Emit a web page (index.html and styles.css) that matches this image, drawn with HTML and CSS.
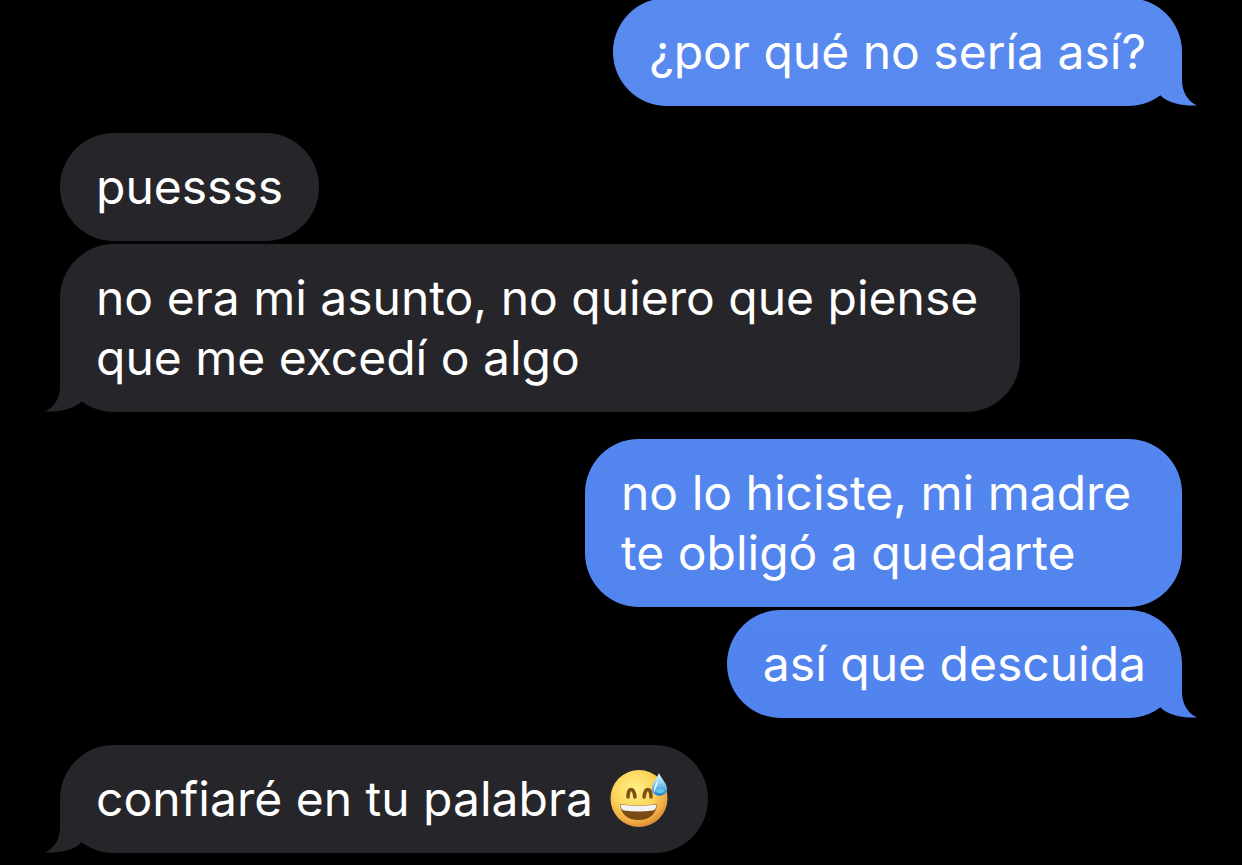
FILE: index.html
```html
<!DOCTYPE html>
<html lang="es">
<head>
    <meta charset="UTF-8">
    <meta name="viewport" content="width=device-width, initial-scale=1.0">
    <title>Chat</title>
    <link rel="stylesheet" href="styles.css">
</head>
<body>
    <main class="chat">
        <div class="group sent">
            <p class="bubble">¿por qué no sería así?
                <svg class="tail light" viewBox="0 0 55 56" aria-hidden="true"><path d="M40 0V30C40 41 45 51 55 55.500C40 56 25 53 18 45L18 10Z"/></svg>
            </p>
        </div>

        <div class="group received">
            <p class="bubble">puessss</p>
            <p class="bubble">no era mi asunto, no quiero que piense que me excedí o algo
                <svg class="tail" viewBox="0 0 55 56" aria-hidden="true"><path d="M40 0V30C40 41 45 51 55 55.500C40 56 25 53 18 45L18 10Z"/></svg>
            </p>
        </div>

        <div class="group sent">
            <p class="bubble">no lo hiciste, mi madre te obligó a quedarte</p>
            <p class="bubble">así que descuida
                <svg class="tail" viewBox="0 0 55 56" aria-hidden="true"><path d="M40 0V30C40 41 45 51 55 55.500C40 56 25 53 18 45L18 10Z"/></svg>
            </p>
        </div>

        <div class="group received">
            <p class="bubble">confiaré en tu palabra
                <svg class="emoji" viewBox="0 0 60 60" role="img" aria-label="sonrisa con gota de sudor">
                    <defs>
                        <radialGradient id="face" cx="0.42" cy="0.34" r="0.68">
                            <stop offset="0" stop-color="#fff08a"/>
                            <stop offset="0.55" stop-color="#fcd458"/>
                            <stop offset="0.85" stop-color="#efa843"/>
                            <stop offset="1" stop-color="#d98a35"/>
                        </radialGradient>
                        <linearGradient id="drop" x1="0" y1="0" x2="0" y2="1">
                            <stop offset="0" stop-color="#e8f8fe"/>
                            <stop offset="0.45" stop-color="#8fd2f2"/>
                            <stop offset="1" stop-color="#1f7fd0"/>
                        </linearGradient>
                    </defs>
                    <circle cx="30" cy="29.500" r="28.500" fill="url(#face)"/>
                    <path d="M19 28C19 18 25 18 26 28M35 28C36 18 42 18 42 28" fill="none" stroke="#7d4f12" stroke-width="3.500" stroke-linecap="round"/>
                    <path d="M11 35Q30 38 48 35C47 45 41 51 29.500 51S12 45 11 35Z" fill="#7a4a16"/>
                    <path d="M11.500 35.500Q30 38 47.500 35.500Q47 41 44 41.500Q29 43.500 15 41.500Q12 41 11.500 35.500Z" fill="#f5f2f3"/>
                    <path d="M50 4C53 11 58 14 58 20C58 29 43 29 43 20C43 14 47 11 50 4Z" fill="url(#drop)"/>
                    <path d="M49 11C45 17 44 21 46 24C46 19 49 17 49 11Z" fill="#dcf4fd"/>
                    <ellipse cx="51" cy="22" rx="4" ry="2" fill="#66c7ee"/>
                </svg>
                <svg class="tail" viewBox="0 0 55 56" aria-hidden="true"><path d="M40 0V30C40 41 45 51 55 55.500C40 56 25 53 18 45L18 10Z"/></svg>
            </p>
        </div>
    </main>
</body>
</html>
```
FILE: styles.css
```css
body {
    margin: 0;
    background-color: #000;
    color: #fff;
    font-family: Inter, sans-serif;
    font-size: 48px;
    line-height: 60px;
}

/* the thread is scrolled slightly past its first bubble */
.chat {
    display: flex;
    flex-direction: column;
    gap: 27px;
    margin-top: -2px;
    padding: 0 60px 12px;
}

.group {
    display: flex;
    flex-direction: column;
    gap: 3px;
}

.sent {
    align-items: flex-end;
}

.received {
    align-items: flex-start;
}

.bubble {
    position: relative;
    box-sizing: border-box;
    margin: 0;
    padding: 24px 36px;
    border-radius: 54px;
}

.sent .bubble {
    max-width: 597px;
    background: linear-gradient(#598aef, #4f82ee) fixed;
}

.received .bubble {
    max-width: 960px;
    background-color: #262529;
}

.tail {
    position: absolute;
    right: -15px;
    bottom: 0;
    width: 55px;
    height: 56px;
    fill: #5083ee;
}

.tail.light {
    fill: #588aef;
}

.received .tail {
    right: auto;
    left: -15px;
    fill: #262529;
    transform: scaleX(-1);
}

.emoji {
    width: 60px;
    height: 60px;
    margin: 0 3px;
    vertical-align: top;
}
```
